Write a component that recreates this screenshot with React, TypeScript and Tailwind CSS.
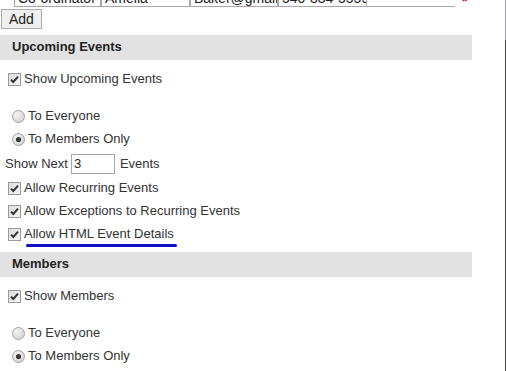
const font = { fontFamily: '"Liberation Sans", Arial, sans-serif' };

function CheckBox() {
  return (
    <svg width="13" height="13" viewBox="0 0 13 13" className="shrink-0">
      <defs>
        <linearGradient id="cbg" x1="0" y1="0" x2="1" y2="1">
          <stop offset="0" stopColor="#dcdcdc" />
          <stop offset="1" stopColor="#f7f7f7" />
        </linearGradient>
      </defs>
      <rect x="0.5" y="0.5" width="12" height="12" fill="url(#cbg)" stroke="#9a9a9a" />
      <path d="M3 6.6 L5.3 9 L10 3.6" fill="none" stroke="#333" strokeWidth="2" />
    </svg>
  );
}

function Radio({ checked }: { checked?: boolean }) {
  return (
    <svg width="13" height="13" viewBox="0 0 13 13" className="shrink-0">
      <defs>
        <radialGradient id="rbg" cx="0.35" cy="0.35" r="0.8">
          <stop offset="0" stopColor="#f4f4f4" />
          <stop offset="1" stopColor="#cfcfcf" />
        </radialGradient>
      </defs>
      <circle cx="6.5" cy="6.5" r="6" fill="url(#rbg)" stroke="#a3a3a3" />
      {checked && <circle cx="6.5" cy="6.5" r="2.6" fill="#3a3a3a" />}
    </svg>
  );
}

function CheckRow({ label }: { label: string }) {
  return (
    <div className="h-[23px] flex items-center pl-[8px] gap-[3px]">
      <CheckBox />
      <span>{label}</span>
    </div>
  );
}

function RadioRow({ label, checked }: { label: string; checked?: boolean }) {
  return (
    <div className="h-[23px] flex items-center pl-[12px] gap-[3px]">
      <Radio checked={checked} />
      <span>{label}</span>
    </div>
  );
}

function Header({ title }: { title: string }) {
  return (
    <div className="w-[472px] h-[25px] bg-[#e2e2e2] flex items-center pl-[12px] font-bold text-[#222]">
      {title}
    </div>
  );
}

export default function App() {
  const cells = [
    { w: 'w-[87px]', t: 'Co-ordinator' },
    { w: 'w-[89px]', t: 'Amelia' },
    { w: 'w-[88px]', t: 'Baker@gmail' },
    { w: 'w-[89px]', t: '540-334-5555' },
  ];
  return (
    <div className="w-[506px] h-[371px] overflow-hidden bg-white flex text-[13px] text-[#333]" style={font}>
      <div className="flex-1 min-w-0">
        {/* row scrolled out of view, only the bottom edge shows */}
        <div className="h-[7px] overflow-hidden flex pl-[14px]">
          {cells.map((c) => (
            <div
              key={c.t}
              className={`${c.w} h-[22px] -mt-[15px] border border-[#a9a9a9] px-[3px] pt-[3px] text-[14px] leading-[18px] text-[#222] overflow-hidden whitespace-nowrap shrink-0`}
            >
              {c.t}
            </div>
          ))}
          <div className="w-[88px] h-[22px] -mt-[15px] border-b border-[#a9a9a9] shrink-0" />
          <div className="ml-[7px] -mt-[9px] text-[#c00] font-bold text-[14px]">*</div>
        </div>

        <div className="mt-[2px] pl-[1px]">
          <button className="h-[20px] px-[7px] bg-[#efefef] border border-[#adadad] text-[14px] text-[#222] leading-none">
            Add
          </button>
        </div>

        <div className="mt-[5px]">
          <Header title="Upcoming Events" />
        </div>

        <div className="mt-[8px]">
          <CheckRow label="Show Upcoming Events" />
        </div>

        <div className="mt-[14px]">
          <RadioRow label="To Everyone" />
          <RadioRow label="To Members Only" checked />
        </div>

        <div className="h-[26px] flex items-center pl-[5px]">
          <span>Show Next</span>
          <div className="ml-[3px] w-[44px] h-[20px] border border-[#a9a9a9] px-[2px] leading-[18px] text-[#222]">3</div>
          <span className="ml-[5px]">Events</span>
        </div>

        <CheckRow label="Allow Recurring Events" />
        <CheckRow label="Allow Exceptions to Recurring Events" />
        <CheckRow label="Allow HTML Event Details" />
        <div className="ml-[26px] w-[151px] h-[3px] rounded-full bg-[#1010c8] -mt-[2px]" />

        <div className="mt-[5px]">
          <Header title="Members" />
        </div>

        <div className="mt-[8px]">
          <CheckRow label="Show Members" />
        </div>

        <div className="mt-[14px]">
          <RadioRow label="To Everyone" />
          <RadioRow label="To Members Only" checked />
          <RadioRow label="Not Shown" />
        </div>
      </div>
      <div className="w-[1px] flex flex-col">
        <div className="h-[40px] bg-[#9a9ab0]" />
        <div className="flex-1 bg-[#4a4a38]" />
      </div>
    </div>
  );
}
